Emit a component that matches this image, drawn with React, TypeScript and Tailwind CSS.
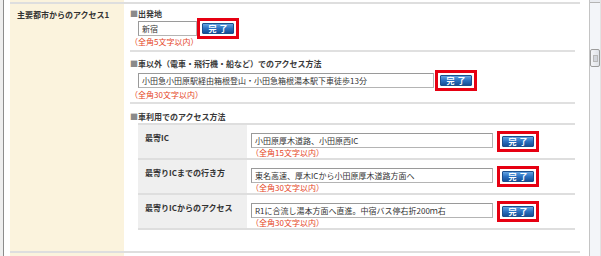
import React from 'react';

const FONT = { fontFamily: '"Noto Sans CJK JP", "Noto Sans", sans-serif' };

function DoneButton({ table = false }: { table?: boolean }) {
  // red annotation frame around the blue 完了 button
  return (
    <div
      className={`box-border w-[42px] h-[21px] border-[3px] border-[#e60012] p-[2px] bg-white shrink-0 ${
        table ? '-mt-[2px] -mb-[4px]' : '-my-[3px]'
      }`}
    >
      <div className="w-[32px] h-[11px] rounded-[1px] border border-[#1b4f8e] bg-gradient-to-b from-[#63a4e2] via-[#2a70c0] to-[#164f96] flex items-center justify-center">
        <span className="text-[8px] leading-[9px] font-bold text-white tracking-[3px] pl-[3px]">完了</span>
      </div>
    </div>
  );
}

function TextBox({ value, w }: { value: string; w: string }) {
  return (
    <div
      className={`${w} h-[15px] box-border border border-[#b4b4b4] border-t-[#9a9a9a] border-l-[#9a9a9a] bg-white pl-[3px] text-[8px] leading-[13px] text-[#333] whitespace-nowrap overflow-hidden shrink-0`}
    >
      {value}
    </div>
  );
}

function Hint({ text, className = '' }: { text: string; className?: string }) {
  return <div className={`text-[8px] leading-[10px] h-[10px] text-[#e5431c] ${className}`}>{text}</div>;
}

function Heading({ text, className = '' }: { text: string; className?: string }) {
  return (
    <div className={`text-[8px] leading-[10px] h-[10px] font-bold text-[#3a3a3a] ${className}`}>
      <span className="text-[#8a8a8a]">■</span>
      {text}
    </div>
  );
}

const carRows = [
  { label: '最寄IC', value: '小田原厚木道路、小田原西IC', hint: '（全角15文字以内）' },
  { label: '最寄りICまでの行き方', value: '東名高速、厚木ICから小田原厚木道路方面へ', hint: '（全角30文字以内）' },
  { label: '最寄りICからのアクセス', value: 'R1に合流し湯本方面へ直進。中宿バス停右折200ｍ右', hint: '（全角30文字以内）' },
];

export default function App() {
  return (
    <div className="w-[601px] h-[256px] overflow-hidden flex bg-white" style={FONT}>
      <div className="w-[3px] bg-[#eeeeee]" />
      <div className="w-px bg-[#8c8c8c]" />
      <div className="w-[6px] bg-white" />

      {/* form table */}
      <div className="w-[570px] flex flex-col">
        <div className="flex h-[2px]">
          <div className="w-[114px] bg-[#fbf3dd]" />
          <div className="flex-1 bg-white" />
        </div>
        <div className="h-[2px] bg-[#dedede]" />

        <div className="flex h-[247px]">
          <div className="w-[114px] bg-[#fbf3dd] pl-[7px] pt-[6px]">
            <div className="text-[8px] leading-[10px] font-bold text-[#333]">主要都市からのアクセス1</div>
          </div>

          <div className="flex-1 bg-white pl-[6px] pr-[5px] pt-[5px] flex flex-col">
            <Heading text="出発地" />
            <div className="flex items-center ml-[8px] mt-[2px]">
              <TextBox value="新宿" w="w-[59px]" />
              <DoneButton />
            </div>
            <Hint text="（全角5文字以内）" className="mt-px" />
            <div className="h-[2px] bg-[#e0e0e0] mt-[3px]" />

            <Heading text="車以外（電車・飛行機・船など）でのアクセス方法" className="mt-[7px]" />
            <div className="flex items-center ml-[8px] mt-[4px]">
              <TextBox value="小田急小田原駅経由箱根登山・小田急箱根湯本駅下車徒歩13分" w="w-[296px]" />
              <div className="w-px" />
              <DoneButton />
            </div>
            <Hint text="（全角30文字以内）" className="mt-[2px]" />
            <div className="h-[2px] bg-[#e0e0e0] mt-[2px]" />

            <Heading text="車利用でのアクセス方法" className="mt-[8px]" />
            <div className="ml-[8px] mt-px border-t-2 border-[#dedede] flex flex-col">
              {carRows.map((r) => (
                <div key={r.label} className="flex h-[35px] border-b-2 border-[#dedede]">
                  <div className="w-[109px] bg-[#efefef] pl-[7px] pt-[8px]">
                    <div className="text-[8px] leading-[10px] font-bold text-[#333] whitespace-nowrap">{r.label}</div>
                  </div>
                  <div className="flex-1 bg-white pl-[4px] pt-[8px] flex flex-col">
                    <div className="flex items-start">
                      <TextBox value={r.value} w="w-[242px]" />
                      <div className="w-[4px]" />
                      <DoneButton table />
                    </div>
                    <Hint text={r.hint} />
                  </div>
                </div>
              ))}
            </div>
          </div>
        </div>

        <div className="h-[2px] bg-[#dedede]" />
        <div className="flex flex-1">
          <div className="w-[114px] bg-[#fbf3dd]" />
          <div className="flex-1 bg-white" />
        </div>
      </div>

      <div className="w-[9px] bg-white" />

      {/* window scrollbar */}
      <div className="w-[12px] box-border border-l border-[#c4c4c4] border-r border-r-[#e2e2e2] bg-[#f3f5f9] flex flex-col">
        <div className="h-[3px] border-b border-[#b4b4b4] bg-[#e9ebf0]" />
        <div className="mt-[46px] h-[18px] box-border border border-[#9c9c9c] rounded-[2px] bg-gradient-to-r from-[#f4f5f8] to-[#dfe2e8] flex items-center justify-center">
          <div className="w-[5px] h-[7px] border border-[#b8b8b8] bg-[#d2d5dc]" />
        </div>
      </div>
    </div>
  );
}
